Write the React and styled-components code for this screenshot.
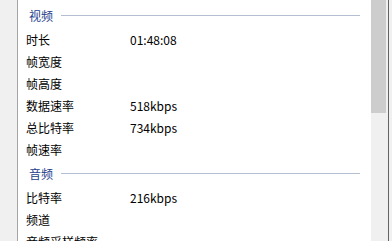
import React from "react";
import styled, { createGlobalStyle } from "styled-components";

const Global = createGlobalStyle`
  html, body {
    margin: 0;
    padding: 0;
    overflow: hidden;
    background: #f0f0f0;
  }
  body {
    font-family: "Noto Sans CJK SC", "Microsoft YaHei", sans-serif;
  }
`;

const Frame = styled.div`
  display: flex;
  width: 392px;
  height: 241px;
  overflow: hidden;
  background: #f0f0f0;
`;

const Gutter = styled.div`
  width: 17px;
  border-right: 1px solid #a5a5a5;
  background: #f0f0f0;
`;

const List = styled.div`
  width: 353px;
  background: #fff;
  padding-top: 2px;
  overflow: hidden;
`;

const Group = styled.div`
  display: flex;
  align-items: center;
  height: 26px;
  padding-left: 11px;
  padding-right: 11px;
  gap: 8px;
  font-size: 12px;
  color: #24408e;
`;

const GroupLine = styled.div`
  flex: 1;
  height: 1px;
  background: #b4c0d2;
`;

const Row = styled.div`
  display: grid;
  grid-template-columns: 104px 1fr;
  align-items: center;
  height: 22px;
  padding-left: 8px;
  font-size: 12px;
  color: #000;
  white-space: nowrap;
`;

const Value = styled.span`
  font-family: "Noto Sans CJK SC", "Segoe UI", sans-serif;
`;

const Scrollbar = styled.div`
  width: 17px;
  background: #f0f0f0;
  display: flex;
  flex-direction: column;
`;

const Thumb = styled.div`
  height: 113px;
  width: 15px;
  background: #cdcdcd;
`;

const Edge = styled.div`
  width: 1px;
  background: #646464;
`;

const Rest = styled.div`
  flex: 1;
  background: #f0f0f0;
`;

const sections = [
  {
    title: "视频",
    rows: [
      ["时长", "01:48:08"],
      ["帧宽度", ""],
      ["帧高度", ""],
      ["数据速率", "518kbps"],
      ["总比特率", "734kbps"],
      ["帧速率", ""],
    ],
  },
  {
    title: "音频",
    rows: [
      ["比特率", "216kbps"],
      ["频道", ""],
      ["音频采样频率", ""],
    ],
  },
];

export default function App() {
  return (
    <>
      <Global />
      <Frame>
        <Gutter />
        <List>
          {sections.map((s) => (
            <div key={s.title}>
              <Group>
                <span>{s.title}</span>
                <GroupLine />
              </Group>
              {s.rows.map(([k, v]) => (
                <Row key={k}>
                  <span>{k}</span>
                  <Value>{v}</Value>
                </Row>
              ))}
            </div>
          ))}
        </List>
        <Scrollbar>
          <Thumb />
        </Scrollbar>
        <Edge />
        <Rest />
      </Frame>
    </>
  );
}
